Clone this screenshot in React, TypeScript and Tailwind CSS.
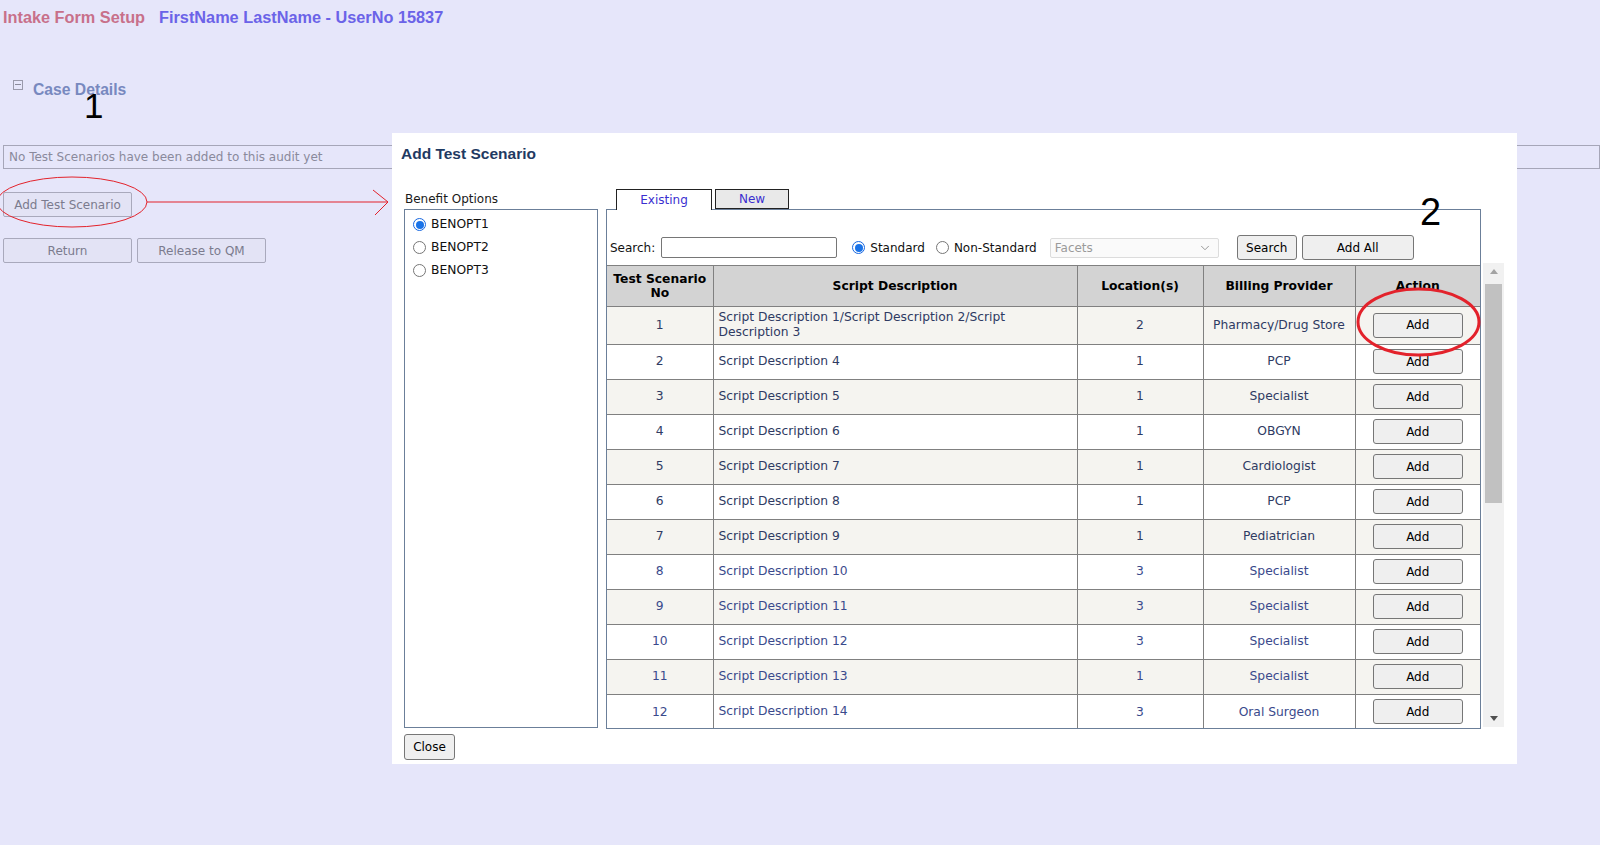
import React from "react";
import { ChevronDown } from "lucide-react";

interface Scenario {
  no: number;
  script: string;
  locations: number;
  provider: string;
}

const scenarios: Scenario[] = [
  { no: 1, script: "Script Description 1/Script Description 2/Script Description 3", locations: 2, provider: "Pharmacy/Drug Store" },
  { no: 2, script: "Script Description 4", locations: 1, provider: "PCP" },
  { no: 3, script: "Script Description 5", locations: 1, provider: "Specialist" },
  { no: 4, script: "Script Description 6", locations: 1, provider: "OBGYN" },
  { no: 5, script: "Script Description 7", locations: 1, provider: "Cardiologist" },
  { no: 6, script: "Script Description 8", locations: 1, provider: "PCP" },
  { no: 7, script: "Script Description 9", locations: 1, provider: "Pediatrician" },
  { no: 8, script: "Script Description 10", locations: 3, provider: "Specialist" },
  { no: 9, script: "Script Description 11", locations: 3, provider: "Specialist" },
  { no: 10, script: "Script Description 12", locations: 3, provider: "Specialist" },
  { no: 11, script: "Script Description 13", locations: 1, provider: "Specialist" },
  { no: 12, script: "Script Description 14", locations: 3, provider: "Oral Surgeon" },
];

const benefitOptions = ["BENOPT1", "BENOPT2", "BENOPT3"];

function Radio({ checked }: { checked?: boolean }) {
  return checked ? (
    <span className="w-[13px] h-[13px] rounded-full border border-[#1767e0] bg-white flex items-center justify-center shrink-0">
      <span className="w-[8px] h-[8px] rounded-full bg-[#1a73e8]" />
    </span>
  ) : (
    <span className="w-[13px] h-[13px] rounded-full border border-[#767676] bg-white shrink-0" />
  );
}

function GrayButton({ children, className }: { children: React.ReactNode; className?: string }) {
  return (
    <button
      className={
        "h-[25px] rounded-[3px] border border-[#767676] bg-[#efefef] text-[12px] text-black leading-none flex items-center justify-center " +
        (className ?? "")
      }
    >
      {children}
    </button>
  );
}

function PageButton({ children, className }: { children: React.ReactNode; className?: string }) {
  return (
    <button
      className={
        "h-[25px] w-[129px] rounded-[2px] border border-[#a9a9bc] bg-[#e3e3f5] text-[12px] text-[#7b7b8e] leading-none flex items-center justify-center " +
        (className ?? "")
      }
    >
      {children}
    </button>
  );
}

export default function App() {
  return (
    <div className="relative w-full h-[845px] overflow-hidden bg-[#e6e6fa] font-['DejaVu_Sans',sans-serif] text-[12px]">
      {/* underlying page */}
      <div className="pt-[7px] pl-[3px] flex items-baseline gap-[14px] font-['Liberation_Sans',Arial,sans-serif] font-bold text-[16.3px] leading-[20px]">
        <span className="text-[#c8708a]">Intake Form Setup</span>
        <span className="text-[#6b63e8]">FirstName LastName - UserNo 15837</span>
      </div>

      <div className="mt-[53px] pl-[13px] flex items-center h-[20px]">
        <span className="w-[10px] h-[10px] border border-[#9a9aab] flex items-center justify-center -mt-[11px]">
          <span className="w-[6px] h-px bg-[#8a8a9a]" />
        </span>
        <span className="ml-[10px] font-['Liberation_Sans',Arial,sans-serif] font-bold text-[15.7px] text-[#7889bf]">
          Case Details
        </span>
      </div>

      <div className="mt-[45px] ml-[3px] h-[24px] border border-[#a6a6b8] flex items-center pl-[5px] text-[#8a8a9c]">
        No Test Scenarios have been added to this audit yet
      </div>

      <div className="mt-[23px] ml-[3px]">
        <PageButton>Add Test Scenario</PageButton>
      </div>

      <div className="mt-[21px] ml-[3px] flex gap-[5px]">
        <PageButton>Return</PageButton>
        <PageButton>Release to QM</PageButton>
      </div>

      {/* modal */}
      <div className="absolute left-[392px] top-[133px] w-[1125px] h-[631px] bg-white pt-[12px] pl-[12px] flex flex-col">
        <div className="ml-[-3px] font-['Liberation_Sans',Arial,sans-serif] font-bold text-[15.5px] leading-[18px] text-[#1f3a62]">
          Add Test Scenario
        </div>

        <div className="mt-[26px] flex">
          {/* benefit options */}
          <div className="w-[194px] flex flex-col">
            <div className="h-[20px] leading-[20px] pl-px text-[#1a1a1a]">Benefit Options</div>
            <div className="h-[519px] border border-[#6b7f99] pt-[8px] pl-[8px] flex flex-col gap-[10px]">
              {benefitOptions.map((opt, i) => (
                <label key={opt} className="flex items-center gap-[5px] h-[13px] text-[12.3px] text-[#111]">
                  <Radio checked={i === 0} />
                  <span>{opt}</span>
                </label>
              ))}
            </div>
          </div>

          {/* scenarios */}
          <div className="ml-[8px] flex flex-col">
            <div className="flex items-end h-[20px] pl-[10px] gap-[3px]">
              <div className="relative z-10 w-[96px] h-[21px] -mb-px bg-white border border-b-0 border-[#222] flex items-center justify-center text-[#3b2fd0]">
                Existing
              </div>
              <div className="w-[74px] h-[20px] bg-[#e9e9e9] border border-[#222] flex items-center justify-center text-[#3b2fd0]">
                New
              </div>
            </div>

            <div className="flex">
              <div className="w-[875px] h-[520px] border border-[#6b7f99] overflow-hidden flex flex-col">
                <div className="h-[56px] shrink-0 pt-[25px] pl-[3px] flex items-start border-b border-[#808080]">
                  <div className="h-[25px] flex items-center">
                    <span className="text-[#111]">Search:</span>
                    <input className="ml-[6px] w-[176px] h-[21px] border border-[#767676] rounded-[2px] bg-white" />
                    <span className="ml-[15px] flex items-center gap-[5px] text-[#111]">
                      <Radio checked />
                      Standard
                    </span>
                    <span className="ml-[11px] flex items-center gap-[5px] text-[#111]">
                      <Radio />
                      Non-Standard
                    </span>
                    <div className="ml-[13px] w-[169px] h-[20px] border border-[#dcdcdc] rounded-[2px] bg-[#fafafa] flex items-center justify-between pl-[4px] pr-[6px] text-[#9a9a9a]">
                      <span>Facets</span>
                      <ChevronDown size={14} strokeWidth={1.5} className="text-[#8a8a8a]" />
                    </div>
                  </div>
                  <GrayButton className="ml-[18px] w-[60px]">Search</GrayButton>
                  <GrayButton className="ml-[5px] w-[112px]">Add All</GrayButton>
                </div>

                <table className="table-fixed border-collapse border-hidden w-[873px] text-[12.3px]">
                  <colgroup>
                    <col className="w-[106px]" />
                    <col className="w-[364px]" />
                    <col className="w-[126px]" />
                    <col className="w-[152px]" />
                    <col className="w-[125px]" />
                  </colgroup>
                  <thead>
                    <tr className="h-[40px] bg-[#d3d3d3] text-black font-bold">
                      <th className="border border-[#808080] leading-[14px] px-[2px]">Test Scenario No</th>
                      <th className="border border-[#808080]">Script Description</th>
                      <th className="border border-[#808080]">Location(s)</th>
                      <th className="border border-[#808080]">Billing Provider</th>
                      <th className="border border-[#808080]">Action</th>
                    </tr>
                  </thead>
                  <tbody>
                    {scenarios.map((s, i) => (
                      <tr
                        key={s.no}
                        className={
                          (i === 0 ? "h-[38px] " : "h-[35px] ") +
                          (i % 2 === 0 ? "bg-[#f5f4f0] " : "bg-white ") +
                          (s.no >= 8 ? "text-[#3a4a8c]" : "text-[#2f3b63]")
                        }
                      >
                        <td className="border border-[#808080] text-center">{s.no}</td>
                        <td className="border border-[#808080] pl-[5px] pr-[10px] leading-[15px]">{s.script}</td>
                        <td className="border border-[#808080] text-center">{s.locations}</td>
                        <td className="border border-[#808080] text-center">{s.provider}</td>
                        <td className="border border-[#808080]">
                          <GrayButton className="mx-auto w-[90px]">Add</GrayButton>
                        </td>
                      </tr>
                    ))}
                  </tbody>
                </table>
              </div>

              {/* scrollbar */}
              <div className="ml-[2px] mt-[54px] w-[21px] h-[464px] bg-[#f1f1f1] flex flex-col items-center">
                <div className="h-[17px] flex items-center justify-center">
                  <span className="w-0 h-0 border-x-[4px] border-x-transparent border-b-[5px] border-b-[#a3a3a3]" />
                </div>
                <div className="mt-[4px] w-[17px] h-[219px] bg-[#c1c1c1]" />
                <div className="mt-auto h-[17px] flex items-center justify-center">
                  <span className="w-0 h-0 border-x-[4px] border-x-transparent border-t-[5px] border-t-[#505050]" />
                </div>
              </div>
            </div>
          </div>
        </div>

        <GrayButton className="mt-[5px] w-[51px] h-[26px]">Close</GrayButton>
      </div>

      {/* annotations */}
      <svg className="absolute inset-0 w-full h-full pointer-events-none" width="1600" height="845">
        <ellipse cx="72" cy="202" rx="75" ry="25" fill="none" stroke="#e3222b" strokeWidth="1" />
        <line x1="147" y1="202" x2="388" y2="202" stroke="#e3222b" strokeWidth="1" />
        <polyline points="373,190 388,202 375,215" fill="none" stroke="#e3222b" strokeWidth="1" />
        <ellipse cx="1418.5" cy="322" rx="60.5" ry="33" fill="none" stroke="#e3222b" strokeWidth="3" />
      </svg>
      <span className="absolute left-[84px] top-[88px] font-['Liberation_Sans',Arial,sans-serif] text-[35px] leading-none text-black">
        1
      </span>
      <span className="absolute left-[1420px] top-[193px] font-['Liberation_Sans',Arial,sans-serif] text-[38px] leading-none text-black">
        2
      </span>
    </div>
  );
}
